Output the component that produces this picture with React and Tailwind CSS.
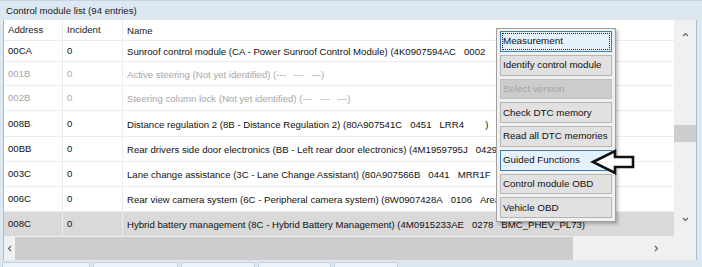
import React from "react";

const rows = [
  { a: "00CA", i: "0", n: "Sunroof control module (CA - Power Sunroof Control Module) (4K0907594AC\u00a0\u00a0\u00a00002", h: "h-[21px]" },
  { a: "001B", i: "0", n: "Active steering (Not yet identified) (---\u00a0\u00a0\u00a0---\u00a0\u00a0\u00a0---)", h: "h-[24px]", dis: true },
  { a: "002B", i: "0", n: "Steering column lock (Not yet identified) (---\u00a0\u00a0\u00a0---\u00a0\u00a0\u00a0---)", h: "h-[25px]", dis: true },
  { a: "008B", i: "0", n: "Distance regulation 2 (8B - Distance Regulation 2) (80A907541C\u00a0\u00a0\u00a00451\u00a0\u00a0\u00a0LRR4\u00a0\u00a0\u00a0\u00a0\u00a0\u00a0\u00a0\u00a0)", h: "h-[26px]" },
  { a: "00BB", i: "0", n: "Rear drivers side door electronics (BB - Left rear door electronics) (4M1959795J\u00a0\u00a0\u00a00429", h: "h-[25px]" },
  { a: "003C", i: "0", n: "Lane change assistance (3C - Lane Change Assistant) (80A907566B\u00a0\u00a0\u00a00441\u00a0\u00a0\u00a0MRR1F", h: "h-[25px]" },
  { a: "006C", i: "0", n: "Rear view camera system (6C - Peripheral camera system) (8W0907428A\u00a0\u00a0\u00a00106\u00a0\u00a0\u00a0Area", h: "h-[25px]" },
  { a: "008C", i: "0", n: "Hybrid battery management (8C - Hybrid Battery Management) (4M0915233AE\u00a0\u00a0\u00a00278\u00a0\u00a0\u00a0BMC_PHEV_PL73)", h: "h-[25px]", sel: true },
];

const menu = [
  { t: "Measurement", focus: true },
  { t: "Identify control module" },
  { t: "Select version", dis: true },
  { t: "Check DTC memory" },
  { t: "Read all DTC memories" },
  { t: "Guided Functions", hover: true },
  { t: "Control module OBD" },
  { t: "Vehicle OBD" },
];

function Row({ r, header }) {
  const color = header ? "text-[#222]" : r.dis ? "text-[#a6a6a6]" : "text-[#111]";
  const bg = r.sel ? "bg-[#d9d9d9]" : "bg-white";
  return (
    <div className={`flex ${r.h} ${bg} ${color} border-b border-[#ececec] items-center whitespace-nowrap`}>
      <div className="w-[59px] h-full flex items-center pl-[4px] border-r border-[#ececec] shrink-0">{r.a}</div>
      <div className="w-[60px] h-full flex items-center pl-[4px] border-r border-[#ececec] shrink-0">{r.i}</div>
      <div className="h-full flex items-center pl-[4px] pt-[2px] flex-1">{r.n}</div>
    </div>
  );
}

export default function App() {
  return (
    <div
      className="relative w-[702px] h-[267px] overflow-hidden bg-[#dde7f2] text-[9.6px] leading-none"
      style={{ fontFamily: '"Liberation Sans", Arial, sans-serif' }}
    >
      {/* title */}
      <div className="h-[20px] border-t border-[#c5d3e3] flex items-center pl-[6px] text-[#1a1a1a] pt-[1px]">
        Control module list (94 entries)
      </div>
      {/* body */}
      <div className="ml-[3px] mr-[5px] border-l border-r border-[#a9bcd2] bg-[#f0f0f0] flex flex-col">
        <div className="flex h-[217px]">
          <div className="w-[670px] bg-white flex flex-col">
            <Row header r={{ a: "Address", i: "Incident", n: "Name", h: "h-[21px]" }} />
            {rows.map((r) => (
              <Row key={r.a} r={r} />
            ))}
          </div>
          {/* vertical scrollbar */}
          <div className="flex-1 bg-[#f0f0f0] flex flex-col items-center">
            <div className="h-[17px] flex items-end">
              <svg width="7" height="5" viewBox="0 0 7 5"><path d="M1 4 L3.5 1.5 L6 4" fill="none" stroke="#606060" strokeWidth="1.1" /></svg>
            </div>
            <div className="h-[88px]" />
            <div className="w-full h-[17px] bg-[#cdcdcd]" />
            <div className="flex-1" />
            <div className="h-[20px] flex items-start">
              <svg width="7" height="5" viewBox="0 0 7 5"><path d="M1 1 L3.5 3.5 L6 1" fill="none" stroke="#606060" strokeWidth="1.1" /></svg>
            </div>
          </div>
        </div>
        {/* horizontal scrollbar */}
        <div className="h-[23px] flex items-center bg-[#f0f0f0]">
          <div className="w-[11px] flex justify-center">
            <svg width="5" height="7" viewBox="0 0 5 7"><path d="M4 1 L1.5 3.5 L4 6" fill="none" stroke="#606060" strokeWidth="1.1" /></svg>
          </div>
          <div className="w-[558px] h-full bg-[#cdcdcd]" />
          <div className="flex-1" />
          <div className="w-[20px] flex justify-start">
            <svg width="5" height="7" viewBox="0 0 5 7"><path d="M1 1 L3.5 3.5 L1 6" fill="none" stroke="#606060" strokeWidth="1.1" /></svg>
          </div>
          <div className="w-[22px] h-full bg-[#f0f0f0]" />
        </div>
      </div>
      {/* bottom strip (buttons cut off) */}
      <div className="flex gap-[3px] pt-[2px] pl-[2px]">
        <div className="w-[88px] h-[8px] bg-[#eef3f9] border border-[#c3d0e0]" />
        <div className="w-[85px] h-[8px] bg-[#eef3f9] border border-[#c3d0e0]" />
        <div className="w-[74px] h-[8px] bg-[#eef3f9] border border-[#c3d0e0]" />
        <div className="w-[73px] h-[8px] bg-[#eef3f9] border border-[#c3d0e0]" />
        <div className="w-[64px] h-[8px] bg-[#eef3f9] border border-[#c3d0e0]" />
      </div>

      {/* context menu */}
      <div className="absolute left-[496px] top-[28px] w-[120px] h-[194px] bg-[#f0f0f0] border border-[#a0a0a0] shadow-[2px_2px_3px_rgba(0,0,0,0.25)] flex flex-col gap-[3px] p-[3px] pt-[2px]">
        {menu.map((m) => {
          let cls = "bg-[#e1e1e1] border-[#b4b4b4] text-[#111]";
          if (m.focus) cls = "bg-[#e5f1fb] border-[#3c7fb1] text-[#111]";
          if (m.hover) cls = "bg-[#e5f1fb] border-[#3c7fb1] text-[#111]";
          if (m.dis) cls = "bg-[#cccccc] border-[#bfbfbf] text-[#a3a3a3]";
          return (
            <div key={m.t} className={`h-[21px] border ${cls} flex items-center relative whitespace-nowrap text-[9.8px]`}>
              {m.focus && <div className="absolute inset-[1px] border border-dotted border-[#222]" />}
              <span className="pl-[2px]">{m.t}</span>
            </div>
          );
        })}
      </div>

      {/* arrow */}
      <svg className="absolute left-[589px] top-[148px]" width="48" height="28" viewBox="0 0 48 28">
        <path d="M4 14 L26 3 L26 9 L44 9 L44 19 L26 19 L26 25 Z" fill="white" stroke="#111" strokeWidth="2.6" strokeLinejoin="miter" />
      </svg>
    </div>
  );
}
